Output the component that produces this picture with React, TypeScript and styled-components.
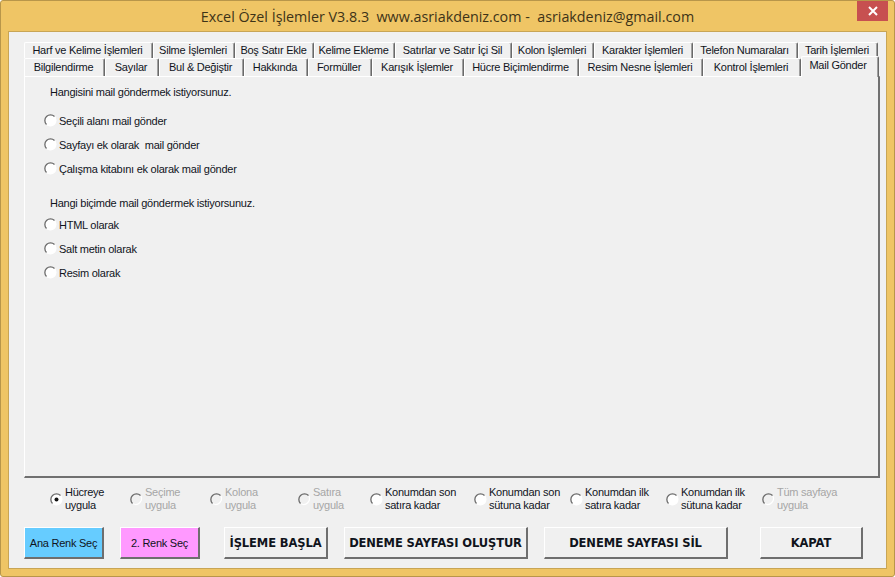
import React from 'react';
import styled, { createGlobalStyle } from 'styled-components';

const GlobalStyle = createGlobalStyle`
    html, body {
        margin: 0;
        padding: 0;
        background: #fff;
    }
    * {
        box-sizing: border-box;
    }
`;

const UI_FONT = `"Liberation Sans", Arial, sans-serif`;

const Win = styled.div`
    width: 895px;
    height: 577px;
    display: flex;
    flex-direction: column;
    background: #efc565;
    border: 1px solid #b8964a;
    border-radius: 3px;
    padding: 0 7px 7px 7px;
    overflow: hidden;
`;

const TitleBar = styled.div`
    height: 30px;
    flex: none;
    position: relative;
    display: flex;
    align-items: center;
    justify-content: center;
    font: 14.3px "Open Sans", sans-serif;
    color: #3d3318;
    white-space: pre;
`;

const CloseBtn = styled.div`
    position: absolute;
    top: 0;
    right: -1px;
    width: 31px;
    height: 20px;
    background: #c75050;
    display: flex;
    align-items: center;
    justify-content: center;
`;

const Client = styled.div`
    flex: 1;
    display: flex;
    flex-direction: column;
    background: #f0f0f0;
    border: 1px solid #c8a555;
    padding: 10px 6px 9px 15px;
    font-family: ${UI_FONT};
    font-size: 11px;
    letter-spacing: -0.25px;
    color: #10141c;
`;

const TabRow = styled.div<{ $h: number }>`
    display: flex;
    height: ${p => p.$h}px;
    flex: none;
    position: relative;
`;

const Tab = styled.div<{ $w: number; $active?: boolean }>`
    width: ${p => p.$w}px;
    flex: none;
    display: flex;
    justify-content: center;
    align-items: ${p => (p.$active ? 'flex-start' : 'center')};
    white-space: pre;
    background: #f0f0f0;
    border-top: 1px solid #fff;
    border-left: 1px solid #fff;
    border-right: 1px solid #696969;
    box-shadow: inset -1px 0 0 #a0a0a0;
    border-radius: 2px 2px 0 0;
    padding: ${p => (p.$active ? '2px 4px 0 0' : '0 2px 2px 0')};
    ${p =>
        p.$active &&
        `
        position: relative;
        z-index: 2;
        height: 21px;
        margin-top: -2px;
        `}
`;

const Page = styled.div`
    height: 402px;
    flex: none;
    background: #f0f0f0;
    border-top: 1px solid #fff;
    border-left: 1px solid #fff;
    border-right: 2px solid #707070;
    border-bottom: 2px solid #707070;
    padding: 7px 0 0 19px;
    display: flex;
    flex-direction: column;
`;

const Question = styled.div<{ $mt: number }>`
    margin: ${p => p.$mt}px 0 0 6px;
    height: 16px;
    line-height: 16px;
`;

const Option = styled.div`
    height: 24px;
    display: flex;
    align-items: center;
    gap: 2px;
    white-space: pre;
`;

const OptionText = styled.span`
    padding-top: 2px;
`;

const OptionGroup = styled.div<{ $mt: number }>`
    margin-top: ${p => p.$mt}px;
    display: flex;
    flex-direction: column;
`;

const ScopeRow = styled.div`
    display: flex;
    margin: 7px 0 0 26px;
    height: 28px;
    flex: none;
`;

const Scope = styled.div<{ $w: number; $disabled?: boolean }>`
    width: ${p => p.$w}px;
    flex: none;
    display: flex;
    align-items: center;
    gap: 2px;
    line-height: 13px;
    white-space: pre;
    color: ${p => (p.$disabled ? '#a6a6a6' : '#10141c')};
`;

const ButtonRow = styled.div`
    display: flex;
    margin-top: 14px;
    height: 32px;
    flex: none;
`;

const Btn = styled.div<{ $w: number; $mr: number; $bg?: string; $bold?: boolean }>`
    width: ${p => p.$w}px;
    margin-right: ${p => p.$mr}px;
    flex: none;
    display: flex;
    align-items: center;
    justify-content: center;
    background: ${p => p.$bg || '#f0f0f0'};
    border-top: 1px solid #fff;
    border-left: 1px solid #fff;
    border-right: 2px solid #6e6e6e;
    border-bottom: 2px solid #6e6e6e;
    white-space: pre;
    ${p =>
        p.$bold
            ? 'font: 700 11.5px "DejaVu Sans", sans-serif; letter-spacing: -0.1px; padding-top: 1px;'
            : ''}
`;

const Radio = ({ on, off }: { on?: boolean; off?: boolean }) => (
    <svg width="13" height="13" viewBox="0 0 13 13" style={{ flex: 'none' }}>
        <circle cx="6.5" cy="6.5" r="6" fill={off ? '#f0f0f0' : '#fff'} />
        <path d="M10.5 2.5 A5.6 5.6 0 0 0 2.5 10.5" fill="none" stroke="#6a6a6a" strokeWidth="1.3" />
        <path d="M10.8 3 A5.8 5.8 0 0 1 3 10.8" fill="none" stroke="#fff" strokeWidth="1.2" />
        {on && <circle cx="6.5" cy="6.5" r="2" fill="#111" />}
    </svg>
);

const row1: [string, number][] = [
    ['Harf ve Kelime İşlemleri', 129],
    ['Silme İşlemleri', 82],
    ['Boş Satır Ekle', 79],
    ['Kelime Ekleme', 81],
    ['Satırlar ve Satır İçi Sil', 117],
    ['Kolon İşlemleri', 82],
    ['Karakter İşlemleri', 99],
    ['Telefon Numaraları', 105],
    ['Tarih İşlemleri', 80]
];

const row2: [string, number][] = [
    ['Bilgilendirme', 81],
    ['Sayılar', 54],
    ['Bul & Değiştir', 85],
    ['Hakkında', 64],
    ['Formüller', 64],
    ['Karışık İşlemler', 92],
    ['Hücre Biçimlendirme', 115],
    ['Resim Nesne İşlemleri', 124],
    ['Kontrol İşlemleri', 98],
    ['Mail Gönder', 78]
];

const firstOptions = ['Seçili alanı mail gönder', 'Sayfayı ek olarak  mail gönder', 'Çalışma kitabını ek olarak mail gönder'];
const secondOptions = ['HTML olarak', 'Salt metin olarak', 'Resim olarak'];

const scopes: { text: string; w: number; on?: boolean; off?: boolean }[] = [
    { text: 'Hücreye\nuygula', w: 80, on: true },
    { text: 'Seçime\nuygula', w: 80, off: true },
    { text: 'Kolona\nuygula', w: 88, off: true },
    { text: 'Satıra\nuygula', w: 72, off: true },
    { text: 'Konumdan son\nsatıra kadar', w: 104 },
    { text: 'Konumdan son\nsütuna kadar', w: 96 },
    { text: 'Konumdan ilk\nsatıra kadar', w: 96 },
    { text: 'Konumdan ilk\nsütuna kadar', w: 96 },
    { text: 'Tüm sayfaya\nuygula', w: 96, off: true }
];

const App = () => (
    <>
        <GlobalStyle />
        <Win>
            <TitleBar>
                Excel Özel İşlemler V3.8.3  www.asriakdeniz.com -  asriakdeniz@gmail.com
                <CloseBtn>
                    <svg width="10" height="10" viewBox="0 0 10 10">
                        <path d="M1 1 L9 9 M9 1 L1 9" stroke="#fff" strokeWidth="2" />
                    </svg>
                </CloseBtn>
            </TitleBar>
            <Client>
                <TabRow $h={16}>
                    {row1.map(([text, w]) => (
                        <Tab key={text} $w={w}>
                            {text}
                        </Tab>
                    ))}
                </TabRow>
                <TabRow $h={18}>
                    {row2.map(([text, w]) => (
                        <Tab key={text} $w={w} $active={text === 'Mail Gönder'}>
                            {text}
                        </Tab>
                    ))}
                </TabRow>
                <Page>
                    <Question $mt={0}>Hangisini mail göndermek istiyorsunuz.</Question>
                    <OptionGroup $mt={8}>
                        {firstOptions.map(text => (
                            <Option key={text}>
                                <Radio />
                                <OptionText>{text}</OptionText>
                            </Option>
                        ))}
                    </OptionGroup>
                    <Question $mt={15}>Hangi biçimde mail göndermek istiyorsunuz.</Question>
                    <OptionGroup $mt={1}>
                        {secondOptions.map(text => (
                            <Option key={text}>
                                <Radio />
                                <OptionText>{text}</OptionText>
                            </Option>
                        ))}
                    </OptionGroup>
                </Page>
                <ScopeRow>
                    {scopes.map(s => (
                        <Scope key={s.text} $w={s.w} $disabled={s.off}>
                            <Radio on={s.on} off={s.off} />
                            <span>{s.text}</span>
                        </Scope>
                    ))}
                </ScopeRow>
                <ButtonRow>
                    <Btn $w={80} $mr={16} $bg="#66ccff">Ana Renk Seç</Btn>
                    <Btn $w={80} $mr={24} $bg="#ff99ff">2. Renk Seç</Btn>
                    <Btn $w={104} $mr={16} $bold>İŞLEME BAŞLA</Btn>
                    <Btn $w={184} $mr={16} $bold>DENEME SAYFASI OLUŞTUR</Btn>
                    <Btn $w={184} $mr={32} $bold>DENEME SAYFASI SİL</Btn>
                    <Btn $w={103} $mr={0} $bold>KAPAT</Btn>
                </ButtonRow>
            </Client>
        </Win>
    </>
);

export default App;
